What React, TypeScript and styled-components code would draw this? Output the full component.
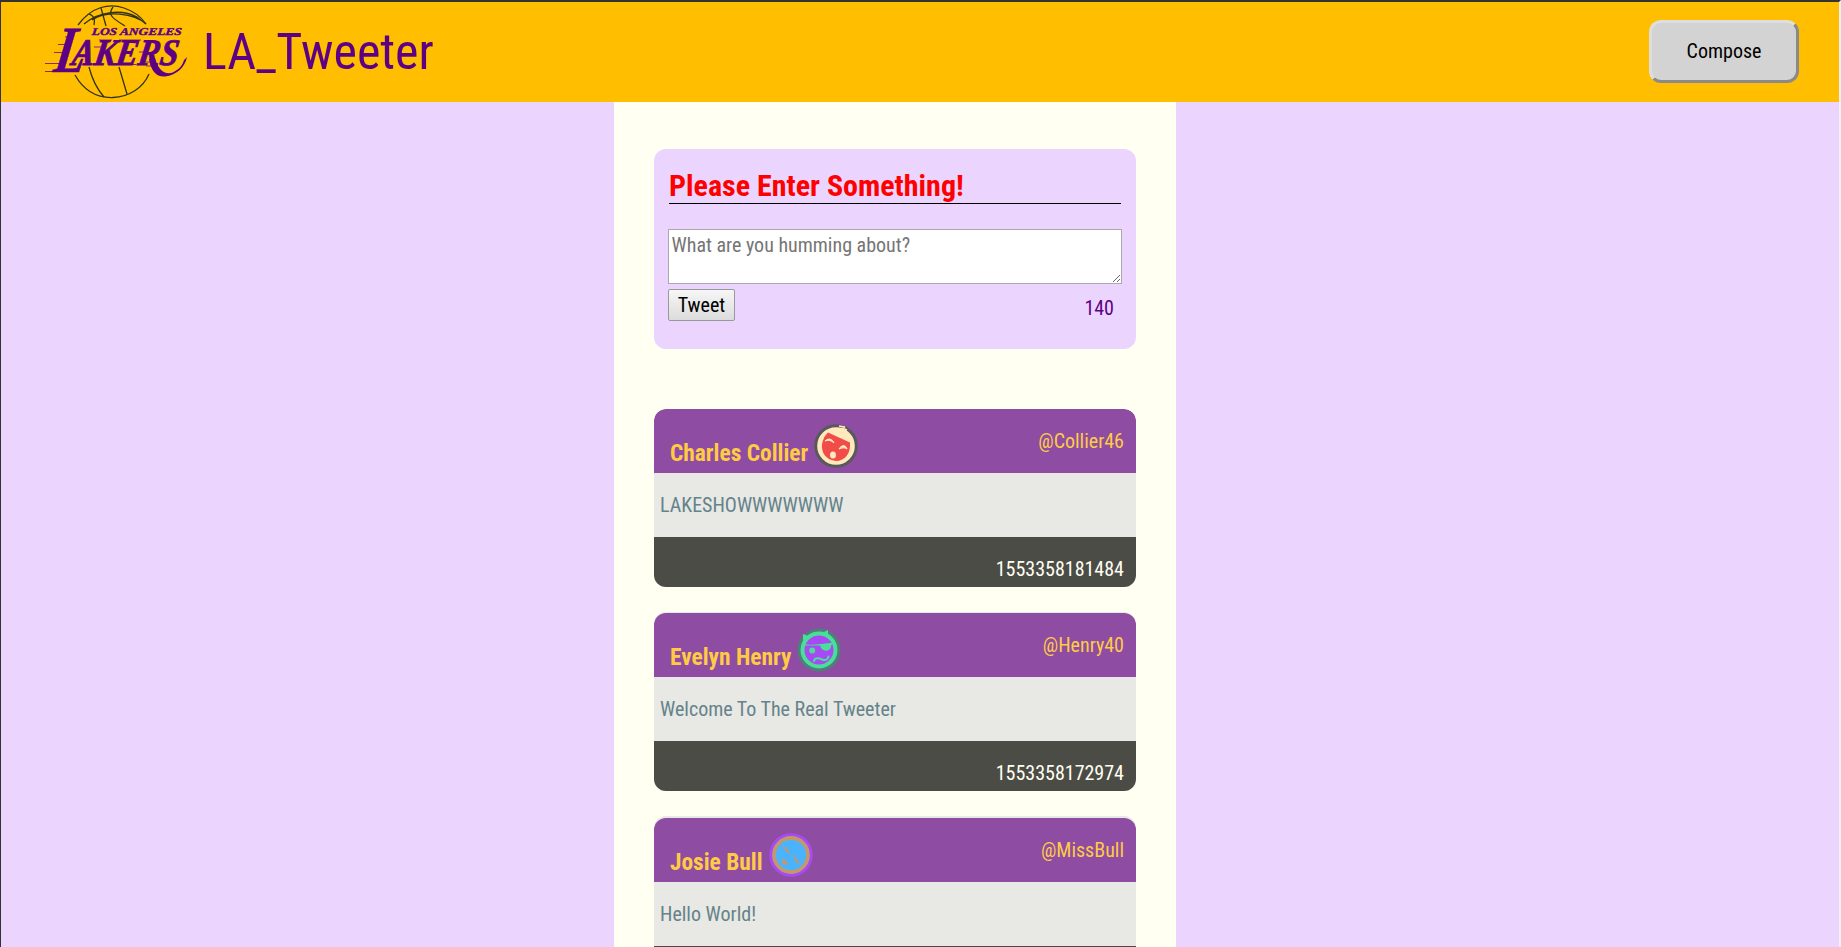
import React from "react";
import styled, { createGlobalStyle } from "styled-components";

const GlobalStyle = createGlobalStyle`
  * { box-sizing: border-box; }
  html { height: 100%; }
  body {
    margin: 0;
    height: 100%;
    overflow: hidden;
    background: #ebd5ff;
    font-family: "Roboto Condensed", Roboto, sans-serif;
    font-stretch: 75%;
    font-size: 20px;
    line-height: 23px;
  }
  #root { height: 100%; }
`;

const Page = styled.div`
  height: 100vh;
  overflow: hidden;
  border-top: 2px solid #333;
  border-left: 1px solid #333;
  border-right: 2px solid #f4f0f4;
`;

const NavBar = styled.header`
  display: flex;
  align-items: center;
  height: 100px;
  padding: 0 40px 0 44px;
  background: #ffbf00;
`;

const Logo = styled.svg`
  flex: none;
  width: 144px;
  height: 96px;
  overflow: visible;
`;

const Brand = styled.h1`
  flex: 1;
  margin: 0 0 0 14px;
  color: #5d0084;
  font-size: 50px;
  font-weight: 400;
  line-height: 60px;
`;

const ComposeButton = styled.button`
  width: 150px;
  height: 63px;
  margin-top: -1px;
  padding: 0;
  border: 3px solid;
  border-color: #dedede #8a8a8a #8a8a8a #dedede;
  border-radius: 12px;
  background: #d3d3d3;
  color: #000;
  font: inherit;
`;

const Column = styled.main`
  display: flex;
  flex-direction: column;
  width: 562px;
  height: 845px;
  margin-left: 613px;
  padding: 47px 40px 0;
  overflow: hidden;
  background: #fffff2;
`;

const ComposePanel = styled.section`
  flex: none;
  height: 200px;
  margin-bottom: 60px;
  padding: 20px 14px 0;
  border-radius: 12px;
  background: #ebd5ff;
`;

const ErrorTitle = styled.h2`
  margin: 0 1px 25px;
  height: 35px;
  border-bottom: 1px solid #000;
  color: #f00;
  font-size: 30px;
  font-weight: 700;
  line-height: 33px;
`;

const TweetInput = styled.textarea`
  display: block;
  width: 100%;
  height: 55px;
  padding: 4px 2.5px;
  border: 1px solid #a9a9a9;
  background: #fff;
  font: inherit;
  resize: vertical;
  &::placeholder { color: #757575; }
`;

const FormActions = styled.div`
  display: flex;
  justify-content: space-between;
  margin-top: 5px;
`;

const TweetButton = styled.button`
  width: 67px;
  height: 32px;
  padding: 0;
  border: 1px solid #999;
  border-radius: 2px;
  background: linear-gradient(#f6f6f6, #dcdcdc);
  color: #000;
  font: inherit;
`;

const Counter = styled.span`
  padding: 8px 8px 0 0;
  color: #5d0084;
`;

const Card = styled.article<{ $lip: number }>`
  flex: none;
  margin-bottom: 25px;
  padding-top: ${(p) => p.$lip}px;
  overflow: hidden;
  border-radius: 12px;
  background: #e8e8e4;
`;

const CardHeader = styled.div`
  display: flex;
  justify-content: space-between;
  height: 64px;
  padding: 14px 12px 0 16px;
  border-radius: 12px 12px 0 0;
  background: #8e4ca3;
  color: #ffcb45;
`;

const Author = styled.div`
  display: flex;
  gap: 6px;
`;

const Name = styled.h3`
  margin: 16px 0 0;
  font-size: 23.4px;
  font-weight: 700;
  line-height: 28px;
`;

const Avatar = styled.svg`
  width: 44px;
  height: 44px;
  margin-top: 1px;
`;

const Handle = styled.span`
  margin-top: 7px;
`;

const CardBody = styled.p`
  height: 64px;
  margin: 0;
  padding: 21px 6px 0;
  color: #64838a;
`;

const CardFooter = styled.div`
  height: 50px;
  padding: 21px 12px 0;
  background: #4c4c47;
  color: #fffff2;
  text-align: right;
`;

const LogoText = styled.text`
  font-family: "Liberation Serif", serif;
  font-style: italic;
  font-weight: 700;
  fill: #5d0084;
  stroke: #5d0084;
`;

const LakersLogo = () => (
  <Logo viewBox="45 4 144 96">
    <g fill="none" stroke="#33331a" strokeWidth="1.3">
      <path d="M78 25C92 6 110 3 124 8C136 12 142 18 146 24" />
      <path d="M84 24C99 11 122 9 137 17L146 24C134 13 106 10 92 20" />
      <path d="M89 14C95 16 95 20 94 25M101 8L106 26M113 7C108 14 110 17 125 26" />
      <path d="M75 75C84 91 98 98 113 97.500C129 97 143 88 149 74" />
      <path d="M89 67C92 79 96 88 104 97M119 67L127 94" />
    </g>
    <g stroke="#5d0084" strokeWidth="1" opacity=".75">
      <path d="M67 31.500H74M65 37H73M58 44.500H69M54 52.500H66M45 63.500H60M45 71.500H62" />
      <path d="M80 64H96M94 47H101M99 40H112M119 40H141M139 52H146M123 64.500H136M145 62H154M146 66H156" />
    </g>
    <LogoText transform="translate(52.500 72) skewX(-9)" fontSize="66" textLength="31" lengthAdjust="spacingAndGlyphs" strokeWidth=".4">L</LogoText>
    <LogoText transform="translate(71 64.500) skewX(-9)" fontSize="37.500" textLength="106" lengthAdjust="spacingAndGlyphs" strokeWidth=".9">AKERS</LogoText>
    <LogoText transform="translate(91.500 35) skewX(-6)" fontSize="10.500" textLength="90" lengthAdjust="spacingAndGlyphs" strokeWidth=".4">LOS ANGELES</LogoText>
    <path d="M149 59C151 71 156 77 165 76.500C177 75 185 67 187 57L184 60C182 67 177 71 171 73C163 74 158 69 155 58Z" fill="#5d0084" />
  </Logo>
);

const LaughingAvatar = () => (
  <Avatar viewBox="0 0 44 44">
    <circle cx="22" cy="22" r="20.300" fill="#ffe9bd" stroke="#58595b" strokeWidth="3" />
    <path d="M14 8.500L36 18.500C37 29 31 37 22 37C12 36 7 29 8 20C9 15 11 11 14 8.500Z" fill="#f14c49" />
    <path d="M11 17C15 13 19 16 20 19C17 16 14 16 11 17ZM25 25C28 20 32 21 33 25C30 23 28 24 25 25Z" fill="#ffe9bd" stroke="#ffe9bd" />
    <ellipse cx="19" cy="31" rx="3" ry="3.500" fill="#ffe9bd" />
    <path d="M25 2L31 3L28 4L33 6M26 5L30 5" fill="none" stroke="#ffe9bd" strokeWidth="1.400" />
  </Avatar>
);

const PirateAvatar = () => (
  <Avatar viewBox="0 0 44 44">
    <circle cx="22" cy="22" r="21.500" fill="#4c8078" />
    <path d="M6 13L6 6L14 9M27 4L31 2L31 8" fill="#4adf99" />
    <circle cx="22" cy="22" r="16.500" fill="#a74af3" stroke="#4adf99" strokeWidth="4" />
    <path d="M8 16.500C17 17 27 16 36 14.500L34 18C34 24 25 25 23 17.500L8 17.500Z" fill="#4adf99" />
    <circle cx="15.200" cy="22.500" r="3" fill="#4adf99" />
    <path d="M17 33C18 29 22 30 25 31.500C29 33 31 31 31.500 28.500" fill="none" stroke="#4adf99" strokeWidth="2" strokeLinecap="round" />
  </Avatar>
);

const MoonAvatar = () => (
  <Avatar viewBox="0 0 44 44">
    <circle cx="22" cy="22" r="21.800" fill="#a74af3" />
    <circle cx="22" cy="22" r="17" fill="#4bb3fb" stroke="#c4986d" strokeWidth="3.800" />
    <path d="M14.500 13C15 17 18 19 21 20L19.500 17.500C17 17 16 15 14.500 13ZM25 23C25 28 28 30 31.500 29.500C28 29 27 26 25 23ZM13 27C13 31 16 32 19 30.500C17 30 17 26 13 27Z" fill="#c4986d" stroke="#c4986d" strokeWidth="1" />
  </Avatar>
);

const tweets = [
  { name: "Charles Collier", handle: "@Collier46", text: "LAKESHOWWWWWWW", time: "1553358181484", lip: 0, Face: LaughingAvatar },
  { name: "Evelyn Henry", handle: "@Henry40", text: "Welcome To The Real Tweeter", time: "1553358172974", lip: 1, Face: PirateAvatar },
  { name: "Josie Bull", handle: "@MissBull", text: "Hello World!", time: "", lip: 2, Face: MoonAvatar },
];

export default function App() {
  return (
    <>
      <GlobalStyle />
      <Page>
        <NavBar>
          <LakersLogo />
          <Brand>LA_Tweeter</Brand>
          <ComposeButton>Compose</ComposeButton>
        </NavBar>
        <Column>
          <ComposePanel>
            <ErrorTitle>Please Enter Something!</ErrorTitle>
            <TweetInput placeholder="What are you humming about?" />
            <FormActions>
              <TweetButton>Tweet</TweetButton>
              <Counter>140</Counter>
            </FormActions>
          </ComposePanel>
          {tweets.map(({ name, handle, text, time, lip, Face }) => (
            <Card key={name} $lip={lip}>
              <CardHeader>
                <Author>
                  <Name>{name}</Name>
                  <Face />
                </Author>
                <Handle>{handle}</Handle>
              </CardHeader>
              <CardBody>{text}</CardBody>
              <CardFooter>{time}</CardFooter>
            </Card>
          ))}
        </Column>
      </Page>
    </>
  );
}
